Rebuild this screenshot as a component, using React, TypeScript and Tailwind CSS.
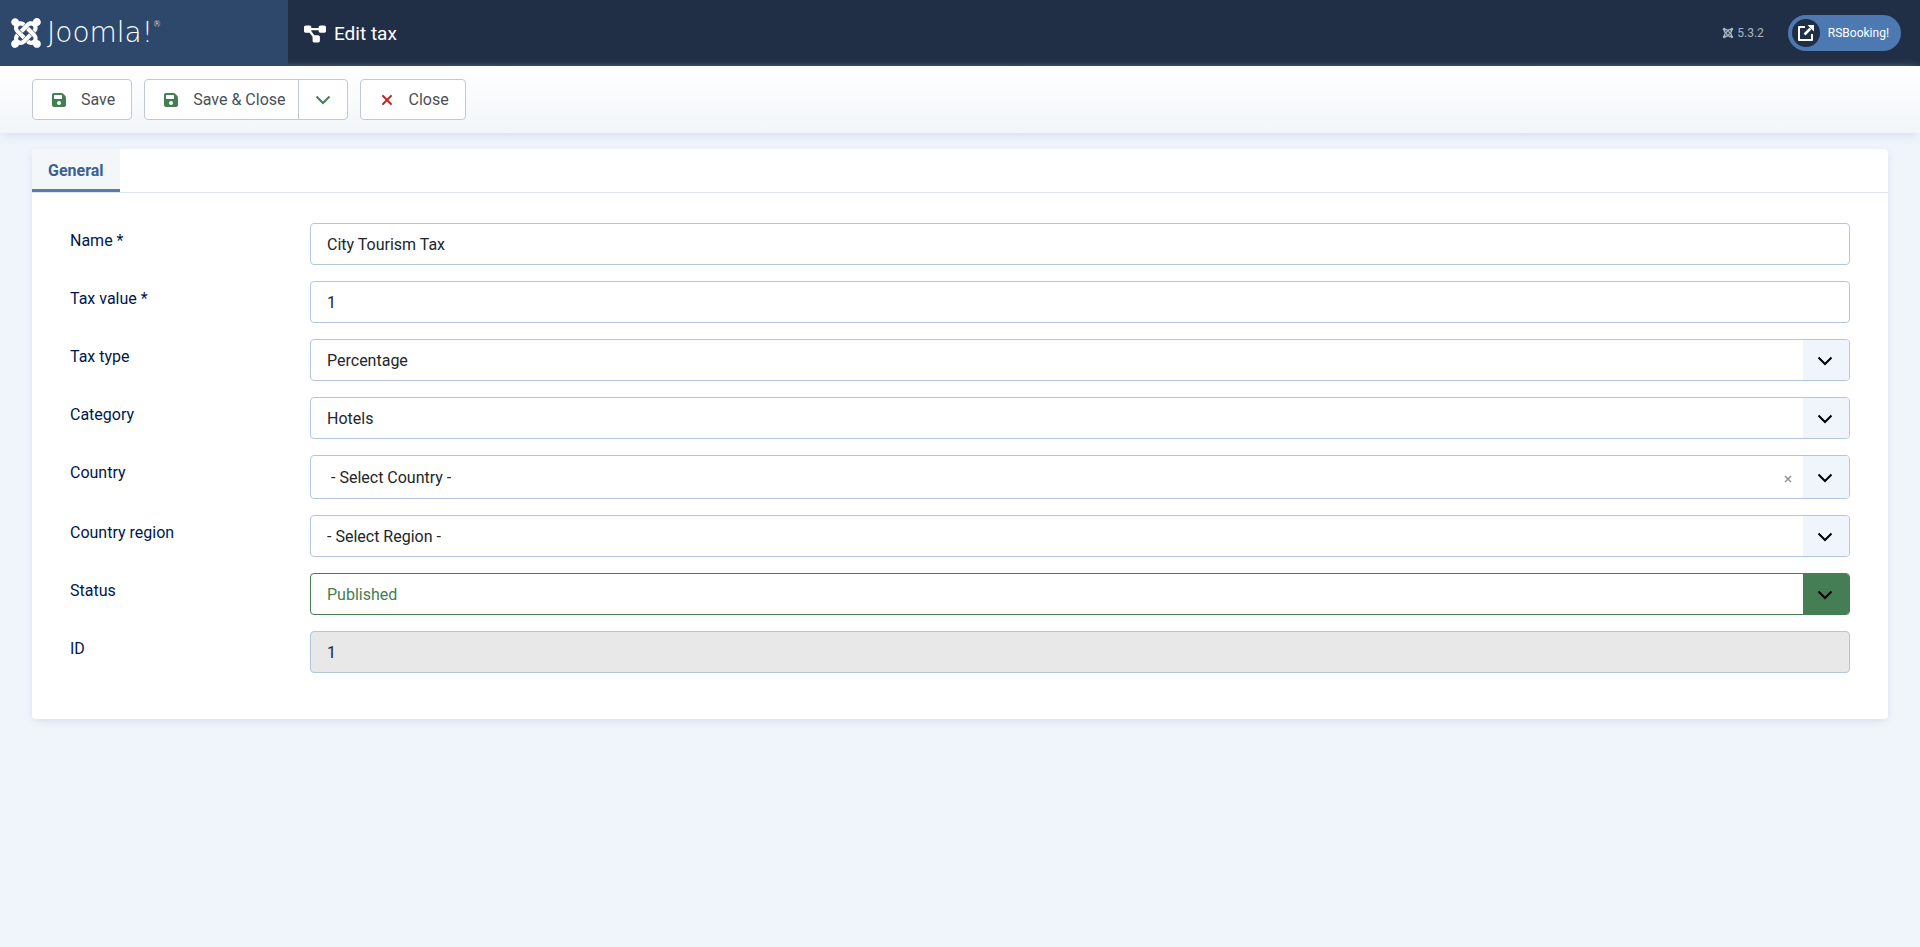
import { useState, type ReactNode } from 'react';
import {
    FaDiagramProject,
    FaFloppyDisk,
    FaJoomla,
    FaXmark,
} from 'react-icons/fa6';

type FieldRowProps = {
    id: string,
    label: string,
    children: ReactNode
}

type SelectFieldProps = {
    id: string,
    value: string,
    options: string[],
    onChange: (value: string) => void,
    variant?: 'default' | 'success',
    clearable?: boolean
}

const inputClass = 'block h-[42px] w-full rounded border border-[#b4c6df] px-4 text-[#22262a]';
const buttonClass = 'flex h-[41px] items-center border border-[#c0c8d4] bg-white text-[#495057]';

function FieldRow({ id, label, children }: FieldRowProps) {
    return (
        <div className="flex items-start">
            <label htmlFor={id} className="w-60 shrink-0 pt-1.5 text-[#00174d]">{label}</label>
            <div className="min-w-0 flex-1">{children}</div>
        </div>
    );
}

function ChevronIcon({ className }: { className?: string }) {
    return (
        <svg viewBox="0 0 16 10" width={16} height={10} fill="none" className={className}>
            <path
                d="M1.5 1.5 8 8l6.5-6.5"
                stroke="currentColor"
                strokeWidth={2}
            />
        </svg>
    );
}

function SelectField({
    id, value, options, onChange, variant = 'default', clearable = false
}: SelectFieldProps) {
    const isSuccess = variant === 'success';
    return (
        <div className="relative">
            <select
                id={id}
                value={value}
                onChange={(e) => onChange(e.target.value)}
                className={`block w-full appearance-none rounded border bg-white pt-0.5 pr-20
                ${isSuccess ? 'border-[#457d54] text-[#457d54]' : 'border-[#b4c6df] text-[#22262a]'}
                ${clearable ? 'h-11 pl-5' : 'h-[42px] pl-4'}`}
            >
                {options.map((option) => <option key={option}>{option}</option>)}
            </select>
            {clearable && (
                <button
                    type="button"
                    aria-label="Remove item"
                    className="absolute inset-y-0 right-14 flex items-center pt-1 pr-0.5
                    text-[#8f959b]"
                    onClick={() => onChange(options[0])}
                >
                    <svg viewBox="0 0 8 8" width={8} height={8} fill="none">
                        <path d="m1 1 6 6M7 1 1 7" stroke="currentColor" strokeWidth={1.5} />
                    </svg>
                </button>
            )}
            <span
                className={`pointer-events-none absolute inset-y-px right-px flex w-[46px]
                items-center justify-center rounded-r-[3px] pt-0.5 pr-0.5 text-black
                ${isSuccess ? 'bg-[#457d54]' : 'bg-[#f0f4fb]'}`}
            >
                <ChevronIcon />
            </span>
        </div>
    );
}

function Header() {
    return (
        <header className="flex h-[66px] bg-[#202f46] text-white">
            <a href="#" className="flex w-72 shrink-0 items-center gap-1 bg-[#2e486b] pl-[9px]">
                <FaJoomla size={34} />
                <span
                    className="flex items-start font-['DejaVu_Sans'] text-[28px] leading-8
                    font-extralight"
                >
                    Joomla!
                    <sup className="top-0 text-[8px] leading-4">®</sup>
                </span>
            </a>
            <div className="flex flex-1 items-center justify-between pr-[19px] pl-4">
                <h1 className="flex items-center gap-2 pt-0.5 text-[19px]">
                    <FaDiagramProject size={22} />
                    Edit tax
                </h1>
                <div className="flex items-center gap-6">
                    <span className="flex items-center gap-[3px] text-xs text-[#a9b5c5]">
                        <FaJoomla size={12} />
                        5.3.2
                    </span>
                    <a
                        href="#"
                        className="flex h-9 items-center gap-2 rounded-full bg-[#4c79b2] pr-3
                        pl-1 text-xs"
                    >
                        <span
                            className="flex size-7 items-center justify-center rounded-full
                            bg-[#202f46]"
                        >
                            <svg viewBox="0 0 16 16" width={16} height={16} fill="none">
                                <path
                                    d="M7 2H1v13h13V9"
                                    stroke="currentColor"
                                    strokeWidth={2}
                                    strokeLinejoin="round"
                                />
                                <path d="m6.5 9.5 6-6" stroke="currentColor" strokeWidth={2.5} />
                                <path d="M9.5 0H16v6.5z" fill="currentColor" />
                            </svg>
                        </span>
                        RSBooking!
                    </a>
                </div>
            </div>
        </header>
    );
}

function Toolbar() {
    return (
        <div
            className="flex h-[67px] items-center gap-3 bg-linear-to-b from-white to-[#f2f6f9]
            px-8 shadow-[0_3px_10px_-2px_#cfdaea]"
        >
            <button type="button" className={`${buttonClass} gap-3.5 rounded pr-4 pl-[18px]`}>
                <FaFloppyDisk size={16} className="text-[#457d54]" />
                Save
            </button>
            <div className="flex">
                <button type="button" className={`${buttonClass} gap-3.5 rounded-l pr-3 pl-[18px]`}>
                    <FaFloppyDisk size={16} className="text-[#457d54]" />
                    Save &amp; Close
                </button>
                <button
                    type="button"
                    aria-label="More save options"
                    className={`${buttonClass} -ml-px w-[50px] justify-center rounded-r`}
                >
                    <ChevronIcon className="text-[#457d54]" />
                </button>
            </div>
            <button type="button" className={`${buttonClass} gap-3.5 rounded pr-4 pl-[18px]`}>
                <FaXmark size={16} className="text-[#c52827]" />
                Close
            </button>
        </div>
    );
}

export default function App() {
    const [name, setName] = useState<string>('City Tourism Tax');
    const [taxValue, setTaxValue] = useState<string>('1');
    const [taxType, setTaxType] = useState<string>('Percentage');
    const [category, setCategory] = useState<string>('Hotels');
    const [country, setCountry] = useState<string>('- Select Country -');
    const [region, setRegion] = useState<string>('- Select Region -');
    const [status, setStatus] = useState<string>('Published');

    return (
        <div className="min-h-screen bg-[#f0f4fb] font-[Roboto,sans-serif] text-base">
            <Header />
            <Toolbar />
            <main className="px-8 py-4">
                <div className="rounded bg-white shadow-[0_3px_10px_-2px_#cfdaea]">
                    <div role="tablist" className="flex border-b border-[#dce4f0]">
                        <button
                            type="button"
                            role="tab"
                            aria-selected="true"
                            className="h-[43px] border-b-3 border-[#5d7ba8] bg-[#f3f7fa] px-4 pt-1
                            font-bold text-[#3b5f93]"
                        >
                            General
                        </button>
                    </div>
                    <form className="flex flex-col gap-4 px-[38px] pt-[30px] pb-[46px]">
                        <FieldRow id="name" label="Name *">
                            <input
                                id="name"
                                type="text"
                                className={inputClass}
                                value={name}
                                onChange={(e) => setName(e.target.value)}
                            />
                        </FieldRow>
                        <FieldRow id="tax_value" label="Tax value *">
                            <input
                                id="tax_value"
                                type="text"
                                className={inputClass}
                                value={taxValue}
                                onChange={(e) => setTaxValue(e.target.value)}
                            />
                        </FieldRow>
                        <FieldRow id="tax_type" label="Tax type">
                            <SelectField
                                id="tax_type"
                                value={taxType}
                                options={['Percentage']}
                                onChange={setTaxType}
                            />
                        </FieldRow>
                        <FieldRow id="category" label="Category">
                            <SelectField
                                id="category"
                                value={category}
                                options={['Hotels']}
                                onChange={setCategory}
                            />
                        </FieldRow>
                        <FieldRow id="country" label="Country">
                            <SelectField
                                id="country"
                                value={country}
                                options={['- Select Country -']}
                                onChange={setCountry}
                                clearable
                            />
                        </FieldRow>
                        <FieldRow id="region" label="Country region">
                            <SelectField
                                id="region"
                                value={region}
                                options={['- Select Region -']}
                                onChange={setRegion}
                            />
                        </FieldRow>
                        <FieldRow id="status" label="Status">
                            <SelectField
                                id="status"
                                value={status}
                                options={['Published']}
                                onChange={setStatus}
                                variant="success"
                            />
                        </FieldRow>
                        <FieldRow id="tax_id" label="ID">
                            <input
                                id="tax_id"
                                type="text"
                                className={`${inputClass} bg-[#e8e8e8]`}
                                value="1"
                                readOnly
                            />
                        </FieldRow>
                    </form>
                </div>
            </main>
        </div>
    );
}
